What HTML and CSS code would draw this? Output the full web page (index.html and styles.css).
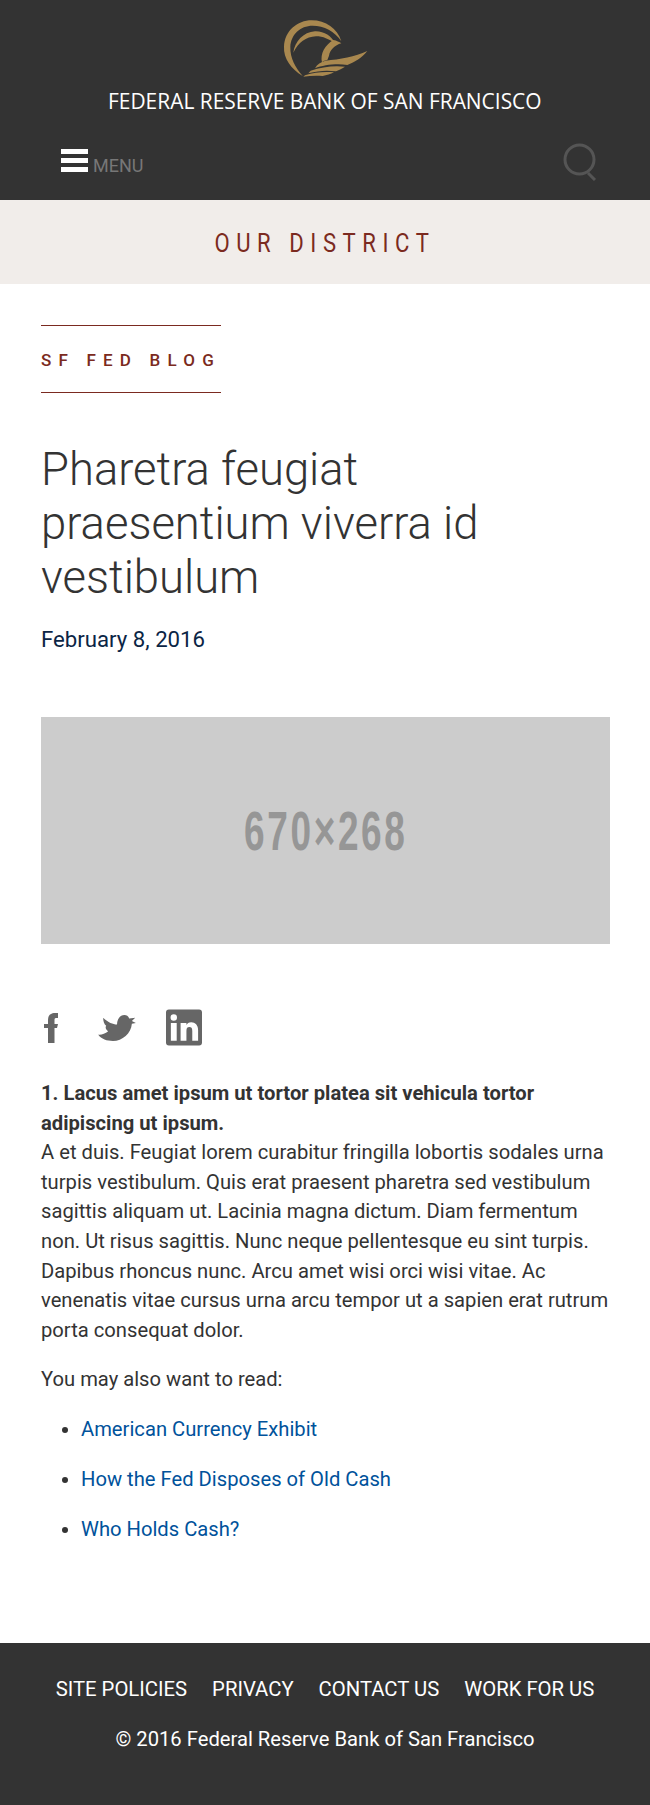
FILE: index.html
```html
<!DOCTYPE html>
<html lang="en">
<head>
<meta charset="utf-8">
<title>SF Fed Blog</title>
<link rel="stylesheet" href="styles.css">
</head>
<body>
<header class="site-header">
  <svg class="logo" viewBox="0 0 390 210" aria-hidden="true">
    <path class="gold" d="M128 198C93 176 70 145 72 110 74 63 112 31 155 31 197 31 232 55 244 94 224 64 192 47 158 47 120 47 93 74 91 110 90 145 106 172 128 198Z"/>
    <path class="gold" d="M100 128C104 95 130 66 165 64 192 63 214 78 226 100 205 87 190 79 168 79 138 80 115 98 100 128Z"/>
    <path class="gold" d="M220 90C230 92 238 96 244 100 224 106 210 120 207 137L202 150C192 152 188 154 186 158 180 130 195 106 220 90Z"/>
    <path class="gold" d="M196 152C240 148 285 140 322 123 305 145 285 155 262 165 230 160 190 165 165 175 172 162 182 156 196 152Z"/>
    <path class="gold" d="M152 182C185 170 225 166 255 170 245 176 235 181 228 184 200 180 175 182 145 190Z"/>
    <path class="gold" d="M135 196C165 186 195 184 222 187 212 192 200 196 188 198 170 196 150 197 130 200Z"/>
  </svg>
  <div class="bank-name">FEDERAL RESERVE BANK OF SAN FRANCISCO</div>
  <div class="toolbar">
    <div class="menu">
      <span class="burger"><i></i><i></i><i></i></span>
      <span class="menu-label">MENU</span>
    </div>
    <svg class="search" viewBox="0 0 36 38" aria-hidden="true">
      <circle cx="16.500" cy="16.500" r="14.500"/>
      <path d="M25 30l7 7"/>
    </svg>
  </div>
</header>
<div class="district"><span>OUR DISTRICT</span></div>
<main class="content">
  <div class="section-tag">SF FED BLOG</div>
  <h1 class="title">Pharetra feugiat praesentium viverra id vestibulum</h1>
  <p class="date">February 8, 2016</p>
  <div class="hero"><span>670×268</span></div>
  <div class="social">
    <svg class="fb" viewBox="0 0 14 30" aria-hidden="true"><path d="M4 30V15H0v-4h4V7C4 2 7 0 11 0h3v5h-2c-1.500 0-1.500 1-1.500 3v3H14l-1 4h-2.500v15z"/></svg>
    <svg class="tw" viewBox="0 0 112 77" aria-hidden="true"><path d="M0 58C8 60 20 56 30 48 24 44 20 38 24 32 18 28 15 18 15 8 30 22 44 28 56 28 56 14 64 0 78 0 85 0 90 4 92 10L110 8 100 18 112 24 100 26C98 55 72 77 44 77 26 77 10 72 0 58Z"/></svg>
    <svg class="li" viewBox="0 0 37 37" aria-hidden="true"><path fill-rule="evenodd" d="M3 0h31a3 3 0 0 1 3 3v31a3 3 0 0 1-3 3H3a3 3 0 0 1-3-3V3a3 3 0 0 1 3-3zM5 14v18h6V14zM8 5a3.300 3.300 0 1 0 0 6.600A3.300 3.300 0 0 0 8 5zM15 14v18h6V22c0-3 1-4 3-4s3 1 3 4v10h6V21c0-5-3-8-7-8-3 0-4 1-5 3v-2z"/></svg>
  </div>
  <p class="article"><strong>1. Lacus amet ipsum ut tortor platea sit vehicula tortor adipiscing ut ipsum.</strong><br>A et duis. Feugiat lorem curabitur fringilla lobortis sodales urna turpis vestibulum. Quis erat praesent pharetra sed vestibulum sagittis aliquam ut. Lacinia magna dictum. Diam fermentum non. Ut risus sagittis. Nunc neque pellentesque eu sint turpis. Dapibus rhoncus nunc. Arcu amet wisi orci wisi vitae. Ac venenatis vitae cursus urna arcu tempor ut a sapien erat rutrum porta consequat dolor.</p>
  <p class="article">You may also want to read:</p>
  <ul class="links">
    <li><a href="#">American Currency Exhibit</a></li>
    <li><a href="#">How the Fed Disposes of Old Cash</a></li>
    <li><a href="#">Who Holds Cash?</a></li>
  </ul>
</main>
<footer class="site-footer">
  <nav class="footer-nav">
    <a href="#">SITE POLICIES</a>
    <a href="#">PRIVACY</a>
    <a href="#">CONTACT US</a>
    <a href="#">WORK FOR US</a>
  </nav>
  <div class="copyright">© 2016 Federal Reserve Bank of San Francisco</div>
</footer>
</body>
</html>
```
FILE: styles.css
```css
* { box-sizing: border-box; }
html, body { margin: 0; padding: 0; }
body {
  font-family: Roboto, "Liberation Sans", sans-serif;
  background: #fff;
  color: #333;
  width: 650px;
  height: 1805px;
  display: flex;
  flex-direction: column;
}
.site-header {
  background: #333;
  height: 200px;
  padding-top: 10px;
  display: flex;
  flex-direction: column;
  align-items: center;
  flex: none;
}
.logo { width: 130px; height: 70px; display: block; flex: none; }
.gold { fill: #a9884f; }
.bank-name {
  font-family: "Open Sans", sans-serif;
  font-size: 21.500px;
  line-height: 26px;
  color: #fff;
  margin-top: 8px;
  margin-bottom: 1px;
  white-space: nowrap;
  transform: scaleX(.973);
}
.toolbar {
  width: 100%;
  display: flex;
  justify-content: space-between;
  align-items: flex-start;
  padding: 34px 51px 0 61px;
}
.menu { display: flex; align-items: flex-end; }
.burger { display: flex; flex-direction: column; gap: 4px; width: 27px; }
.burger i { display: block; height: 5px; background: #fff; }
.menu-label { font-size: 18px; line-height: 20px; color: #777; margin-left: 5px; margin-bottom: -4px; }
.search { width: 36px; height: 38px; fill: none; stroke: #555; stroke-width: 3; margin-top: -6px; }
.district {
  flex: none;
  height: 84px;
  background: #f1edea;
  color: #7b2a20;
  font-size: 26px;
  line-height: 86px;
  text-align: center;
  font-weight: 400;
}
.district span { display: inline-block; letter-spacing: 7.700px; transform: scaleX(.85); }
.content { flex: 1; padding: 41px 40px 0 41px; }
.section-tag {
  width: 180px;
  height: 68px;
  border-top: 1px solid #7b2a20;
  border-bottom: 1px solid #7b2a20;
  color: #7b2a20;
  font-size: 17px;
  font-weight: 500;
  letter-spacing: 7.200px;
  line-height: 68px;
  white-space: nowrap;
}
.title {
  font-weight: 300;
  font-size: 45.400px;
  line-height: 54px;
  color: #333;
  margin: 50px 0 0;
}
.date { margin: 19px 0 0; font-size: 22.200px; line-height: 30px; color: #0b2545; }
.hero {
  margin-top: 63px;
  width: 569px;
  height: 227px;
  background: #ccc;
  display: flex;
  align-items: center;
  justify-content: center;
}
.hero span {
  font-family: "Liberation Sans", sans-serif;
  font-weight: 700;
  font-size: 56px;
  letter-spacing: 4px;
  color: #969696;
  transform: scaleX(.66);
}
.social { display: flex; align-items: center; margin-top: 65px; height: 37px; padding-left: 3px; fill: #666; }
.fb { width: 14px; height: 30px; margin-right: 40px; }
.tw { width: 38px; height: 26px; margin-right: 30px; }
.li { width: 36px; height: 37px; }
.article { font-size: 20.200px; line-height: 29.600px; margin: 0 0 20px; color: #333; }
.social + .article { margin-top: 33px; }
.links { margin: 0; padding: 0 0 0 40px; font-size: 20.200px; line-height: 29.600px; }
.links li { margin-bottom: 20.400px; color: #333; }
.links a { color: #00529b; text-decoration: none; }
.site-footer {
  flex: none;
  height: 162px;
  background: #333;
  color: #fff;
  padding-top: 31px;
  text-align: center;
}
.footer-nav { display: flex; justify-content: center; gap: 25px; }
.footer-nav a { color: #fff; text-decoration: none; font-size: 20.300px; line-height: 30px; }
.copyright { font-size: 20.200px; line-height: 30px; margin-top: 20px; }
```
